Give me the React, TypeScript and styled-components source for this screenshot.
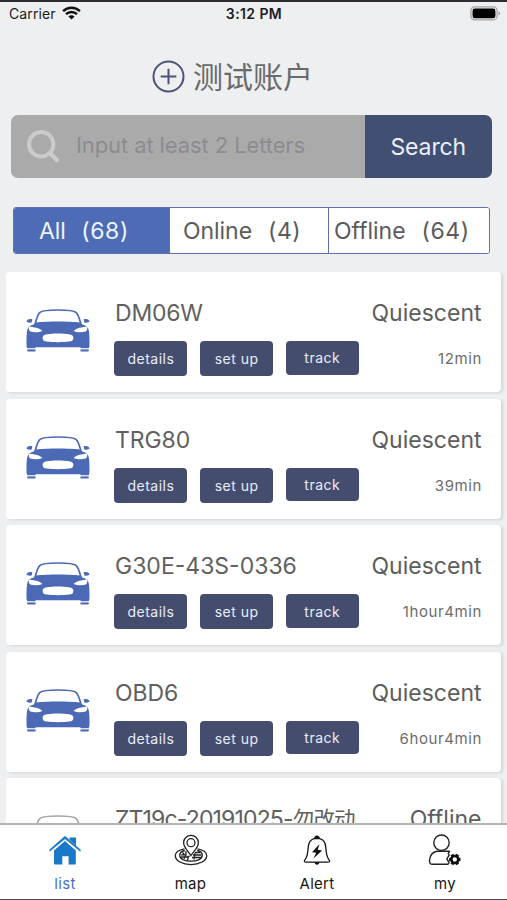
import React from "react";
import styled, { createGlobalStyle } from "styled-components";

const GlobalStyle = createGlobalStyle`
  * { box-sizing: border-box; }
  body { margin: 0; background: #edeff1; }
  button, input { font: inherit; letter-spacing: inherit; border: 0; padding: 0; margin: 0; }
`;

const Screen = styled.div`
  width: 507px;
  height: 900px;
  display: flex;
  flex-direction: column;
  overflow: hidden;
  background: #edeff1;
  border-top: 2px solid #2f2d31;
  border-bottom: 1px solid #4a4a4c;
  color: #5b5b5b;
  font-family: Inter, "Noto Sans CJK SC", sans-serif;
`;

const StatusBar = styled.div`
  height: 24px;
  flex: none;
  display: grid;
  grid-template-columns: 1fr auto 1fr;
  align-items: center;
  padding: 0 6px 2px 9px;
  color: #1c1c1d;
  font-size: 14px;
`;

const Carrier = styled.div`
  display: flex;
  align-items: center;
  gap: 6px;
  letter-spacing: 0.12px;
`;

const Clock = styled.div`
  margin-left: -2px;
  font-weight: 600;
  font-size: 14px;
  letter-spacing: 0.4px;
`;

const Battery = styled.div`
  display: flex;
  justify-content: flex-end;
`;

const Title = styled.header`
  height: 89px;
  flex: none;
  display: flex;
  align-items: center;
  padding: 11px 0 0 152px;
  gap: 8px;
  font-size: 30px;
  font-family: "Noto Sans CJK SC", sans-serif;
  font-weight: 400;
  line-height: 38px;
  color: #6a6a6a;
`;

const TitleText = styled.span`
  margin-bottom: 2px;
`;

const SearchBar = styled.div`
  height: 63px;
  flex: none;
  display: flex;
  margin: 0 15.5px 0 11px;
  border-radius: 7px;
  overflow: hidden;
`;

const SearchField = styled.label`
  flex: 1;
  min-width: 0;
  display: flex;
  align-items: center;
  gap: 15px;
  padding-left: 15px;
  background: #aaaaaa;
`;

const SearchInput = styled.input`
  flex: 1;
  min-width: 0;
  height: 40px;
  margin-bottom: 4px;
  background: transparent;
  outline: none;
  font-size: 22px;
  letter-spacing: -0.1px;
  &::placeholder { color: #8c8c90; opacity: 1; }
`;

const SearchButton = styled.button`
  width: 126.5px;
  flex: none;
  padding-top: 1px;
  background: #414f72;
  color: #e9f0fb;
  font-size: 23px;
  letter-spacing: -0.1px;
`;

const Tabs = styled.nav`
  height: 47px;
  flex: none;
  display: grid;
  grid-template-columns: 156px 159px 1fr;
  margin: 29px 17px 18px 13px;
  border: 1.5px solid #5f70ae;
  border-radius: 3px;
  background: #fff;
  overflow: hidden;
`;

const Tab = styled.button<{ $active?: boolean; $inset: number }>`
  display: flex;
  align-items: center;
  padding: 0 0 0 ${(p) => p.$inset}px;
  background: ${(p) => (p.$active ? "#4e6bb5" : "#fff")};
  color: ${(p) => (p.$active ? "#edf4ff" : "#5b5b5b")};
  border-right: 1px solid #5f70ae;
  font-size: 23px;
  letter-spacing: -0.05px;
  white-space: nowrap;
  &:last-child { border-right: 0; }
`;

const Count = styled.span<{ $gap: number }>`
  margin-left: ${(p) => p.$gap}px;
  letter-spacing: 0.55px;
`;

const List = styled.main`
  flex: 1;
  min-height: 0;
  overflow: hidden;
  display: flex;
  flex-direction: column;
  gap: 6.6px;
  padding: 0 6px;
`;

const Card = styled.article`
  height: 120px;
  flex: none;
  display: flex;
  padding: 0 19.5px 0 20px;
  background: #fff;
  border-radius: 4px;
  box-shadow: 2px 1px 3px rgba(60, 66, 74, 0.14);
`;

const CarSlot = styled.div`
  width: 89px;
  flex: none;
  padding-top: 36px;
`;

const Details = styled.div`
  flex: 1;
  min-width: 0;
  padding-top: 26px;
`;

const Row = styled.div`
  display: flex;
  justify-content: space-between;
`;

const NameText = styled.div<{ $spacing: number }>`
  font-size: 23px;
  line-height: 30px;
  font-weight: 400;
  letter-spacing: ${(p) => p.$spacing}px;
  color: #606060;
  white-space: nowrap;
`;

const NameNote = styled.span`
  font-size: 21.5px;
`;

const State = styled.div`
  font-size: 23px;
  line-height: 30px;
  letter-spacing: 0;
  color: #5d5d5d;
`;

const ActionRow = styled(Row)`
  margin-top: 13.2px;
`;

const Actions = styled.div`
  display: flex;
  align-items: flex-start;
  gap: 12.7px;
  margin-left: -0.6px;
`;

const Action = styled.button<{ $short?: boolean }>`
  width: 73px;
  height: ${(p) => (p.$short ? 33.5 : 35)}px;
  border-radius: 4px;
  background: #454d6e;
  color: #e8edf9;
  font-size: 14px;
  letter-spacing: 0.5px;
`;

const Elapsed = styled.div`
  padding-top: 8px;
  font-size: 15px;
  line-height: 20px;
  letter-spacing: 0.6px;
  margin-right: -0.5px;
  color: #6c6c6c;
`;

const BottomBar = styled.nav`
  height: 76.5px;
  flex: none;
  display: grid;
  grid-template-columns: 130px 121px 132px 1fr;
  background: #fff;
  border-top: 2px solid #b4b4b6;
`;

const BottomItem = styled.button<{ $active?: boolean }>`
  display: flex;
  flex-direction: column;
  align-items: center;
  padding-top: 9px;
  gap: 8px;
  background: transparent;
  color: ${(p) => (p.$active ? "#4871c5" : "#161616")};
  font-size: 15px;
  line-height: 20px;
  letter-spacing: 0.3px;
  svg { display: block; }
`;

const Wifi = () => (
  <svg width="19" height="14" viewBox="0 0 19 14" fill="none" stroke="#111">
    <path d="M1.1 5.1a12 12 0 0 1 16.8 0" strokeWidth="2.5" />
    <path d="M4 8.2a7.8 7.8 0 0 1 11 0" strokeWidth="2.4" />
    <path d="M9.5 13.6 6.4 10.5a4.4 4.4 0 0 1 6.2 0Z" fill="#111" stroke="none" />
  </svg>
);

const BatteryIcon = () => (
  <svg width="31" height="15" viewBox="0 0 31 15">
    <rect x="0.9" y="0.9" width="26.2" height="13" rx="4" fill="#e8e8e8" stroke="#a5a5a7" strokeWidth="1.3" />
    <rect x="2.6" y="2.5" width="22.8" height="9.8" rx="2.4" fill="#000" />
    <path d="M28.6 5.2c2 .8 2 3.6 0 4.4z" fill="#98989a" />
  </svg>
);

const PlusCircle = () => (
  <svg width="33" height="33" viewBox="0 0 33 33" fill="none" stroke="#4a5277" strokeWidth="2">
    <circle cx="16.5" cy="16.5" r="15" />
    <path d="M16.5 8.7v15.6M8.7 16.5h15.6" />
  </svg>
);

const Magnifier = () => (
  <svg width="35" height="35" viewBox="0 0 35 35" fill="none" stroke="#cbcbce">
    <circle cx="15.200" cy="15.300" r="12.200" strokeWidth="4" />
    <path d="m24 24 7 7.200" strokeWidth="4.4" strokeLinecap="round" />
  </svg>
);

const Car = ({ color }: { color: string }) => (
  <svg width="64" height="45" viewBox="0 0 64 45">
    <path
      d="M9 16.5C10.5 10.5 12 6 14 4.4 16.300 2.300 25 2 32 2s15.700.3 18 2.400c2 1.600 3.500 6.100 5 12.100"
      fill="#fff"
      stroke={color}
      strokeWidth="1.700"
    />
    <path
      d="M10 14.500C20 13.200 44 13.200 54 14.500l2.800 2.200c2.500.5 4.800 1.900 5.700 4.500.9 3 1 8 1 14.300 0 2.600-.1 4-1 4.500H1.500C.6 39.500.5 38.100.5 35.500c0-6.300.1-11.300 1-14.300.9-2.600 3.200-4 5.700-4.500z"
      fill={color}
    />
    <path d="M.4 13.500c.8-2.700 3.500-3 6-2.300l-.8 3.200c-2 .6-4 .2-5.200-.9zM63.600 13.500c-.8-2.700-3.500-3-6-2.300l.8 3.200c2 .6 4 .2 5.200-.9z" fill={color} />
    <path d="M2.800 18.700c5 .2 10.500 1.200 13.700 4.200-3.700 1.600-8.500 1.600-12.300.5-1.400-1.300-1.700-3-1.400-4.700zM61.200 18.700c-5 .2-10.500 1.200-13.700 4.200 3.700 1.600 8.500 1.600 12.300.5 1.400-1.300 1.700-3 1.400-4.700z" fill="#fff" />
    <path d="M21 26.200c6-1 16-1 22 0 3.200.6 4.400 1.700 4.400 3.700s-1.200 3.200-4.400 3.700c-6 .8-16 .8-22 0-3.200-.5-4.400-1.700-4.400-3.700s1.200-3.100 4.400-3.700z" fill="#fff" />
    <path d="M9.500 39.300h45v1.700h-45z" fill="#fff" />
    <path d="M1.200 40.500h8.300v1H1.200zM54.500 40.500h8.300v1h-8.300z" fill={color} opacity=".4" />
    <path d="M1.200 41.500h8.300v1.900H2c-.5 0-.8-.4-.8-1zM54.500 41.500h8.300v.9c0 .6-.3 1-.8 1h-7.500z" fill={color} />
  </svg>
);

const HomeIcon = () => (
  <svg width="34" height="32" viewBox="0 0 34 32" fill="#1978c8">
    <path d="M6 16.500 17 7l10.800 9.500v12.800c0 .8-.4 1.200-1.200 1.200h-6v-8.300h-6.300v8.300H7.200c-.8 0-1.200-.4-1.200-1.200z" />
    <path d="m1.700 17.300-.1-1.600L16.300 2.700c.4-.4 1-.4 1.400 0l14.700 13-.2 1.600L17 4.800z" stroke="#1978c8" strokeWidth=".5" />
    <path d="M21.500 3.600H28v7.900l-6.500-5.700z" />
  </svg>
);

const MapIcon = () => (
  <svg width="34" height="32" viewBox="0 0 34 32" fill="none" stroke="#222" strokeWidth="1.300">
    <path d="M10.500 14.800C5 15.800 1.300 18 1.300 21.700c0 5 7 8.900 15.700 8.900s15.700-3.900 15.700-8.900c0-3.700-3.700-5.900-9.200-6.900" />
    <path d="M10.800 16.500C7.500 17.300 5.700 19 5.700 21.200c0 3.700 5 6 11.300 6s11.300-2.300 11.300-6c0-2.200-1.800-3.900-5.100-4.700" />
    <path d="M17 21.500C14.500 17.500 9.600 13.500 9.600 8.700a7.400 7.400 0 0 1 14.800 0c0 4.800-4.900 8.800-7.400 12.800z" fill="#fff" />
    <circle cx="17" cy="8.700" r="4" />
    <path d="M8.500 18.500l2 2.300-3.300.2M12 17v4l-2 3.800M6.800 23h6l3-1M13.500 26.500l1-4.500M19 21h8.300M21 18.500h5.300M18 23.500h9M20 25.500l1-6.500" strokeWidth="1.300" />
  </svg>
);

const BellIcon = () => (
  <svg width="34" height="32" viewBox="0 0 34 32" fill="none" stroke="#151515" strokeWidth="1.300" strokeLinejoin="round">
    <path d="M14.200 4.700c-4 1.200-5.800 4.400-6 8.800-.3 5.200-.8 8.500-2.700 11.500-.8 1.300-1.500 1.800-1.100 2.500.3.600 1.100.7 2.200.7h20.800c1.100 0 1.900-.1 2.200-.7.400-.7-.3-1.200-1.100-2.500-1.900-3-2.400-6.300-2.700-11.500-.2-4.400-2-7.600-6-8.800z" />
    <path d="M14.100 4.300C14.400 2.500 15.500 1.600 17 1.600s2.600.9 2.900 2.700zM14.600 28.300h4.800c0 1.500-1 2.500-2.400 2.500s-2.400-1-2.400-2.500z" fill="#151515" stroke="none" />
    <path d="M19.500 10 12 18.200l4.200.6-2.700 5.700 8.600-8-4.400-.8z" fill="#111" stroke="none" />
  </svg>
);

const gearTeeth = [0, 60, 120, 180, 240, 300];

const UserIcon = () => (
  <svg width="34" height="32" viewBox="0 0 34 32" fill="none" stroke="#222" strokeWidth="1.400">
    <circle cx="13.500" cy="8.700" r="7.700" />
    <path d="M9 17.300c-4.200.8-7 3.700-7.500 9-.2 2.900.8 4 3 4h15.300l1.300-1.800-2.300-3.600 2.400-3.700-1-1.600 1.400-2.300z" strokeLinejoin="round" />
    <circle cx="26.800" cy="25.500" r="3.500" stroke="#111" strokeWidth="2.700" />
    {gearTeeth.map((angle) => (
      <path key={angle} d="M26.800 21.700v-1.900" stroke="#111" strokeWidth="3.200" transform={`rotate(${angle + 30} 26.800 25.500)`} />
    ))}
  </svg>
);

const BLUE = "#4c69b6";

const devices = [
  { name: "DM06W", spacing: -0.2, state: "Quiescent", elapsed: "12min", color: BLUE },
  { name: "TRG80", spacing: -0.1, state: "Quiescent", elapsed: "39min", color: BLUE },
  { name: "G30E-43S-0336", spacing: 0, state: "Quiescent", elapsed: "1hour4min", color: BLUE },
  { name: "OBD6", spacing: -0.1, state: "Quiescent", elapsed: "6hour4min", color: BLUE },
  { name: "ZT19c-20191025-", note: "勿改动", spacing: -0.85, state: "Offline", elapsed: "", color: "#a6a6a6" },
];

export default function App() {
  return (
    <>
      <GlobalStyle />
      <Screen>
        <StatusBar>
          <Carrier>Carrier <Wifi /></Carrier>
          <Clock>3:12 PM</Clock>
          <Battery><BatteryIcon /></Battery>
        </StatusBar>
        <Title>
          <PlusCircle />
          <TitleText>测试账户</TitleText>
        </Title>
        <SearchBar>
          <SearchField>
            <Magnifier />
            <SearchInput placeholder="Input at least 2 Letters" />
          </SearchField>
          <SearchButton>Search</SearchButton>
        </SearchBar>
        <Tabs>
          <Tab $active $inset={25}>All<Count $gap={15.5}>(68)</Count></Tab>
          <Tab $inset={13}>Online<Count $gap={16}>(4)</Count></Tab>
          <Tab $inset={5}>Offline<Count $gap={16}>(64)</Count></Tab>
        </Tabs>
        <List>
          {devices.map((d) => (
            <Card key={d.name}>
              <CarSlot><Car color={d.color} /></CarSlot>
              <Details>
                <Row>
                  <NameText $spacing={d.spacing}>
                    {d.name}
                    {d.note && <NameNote>{d.note}</NameNote>}
                  </NameText>
                  <State>{d.state}</State>
                </Row>
                <ActionRow>
                  <Actions>
                    <Action>details</Action>
                    <Action>set up</Action>
                    <Action $short>track</Action>
                  </Actions>
                  <Elapsed>{d.elapsed}</Elapsed>
                </ActionRow>
              </Details>
            </Card>
          ))}
        </List>
        <BottomBar>
          <BottomItem $active><HomeIcon />list</BottomItem>
          <BottomItem><MapIcon />map</BottomItem>
          <BottomItem><BellIcon />Alert</BottomItem>
          <BottomItem><UserIcon />my</BottomItem>
        </BottomBar>
      </Screen>
    </>
  );
}
